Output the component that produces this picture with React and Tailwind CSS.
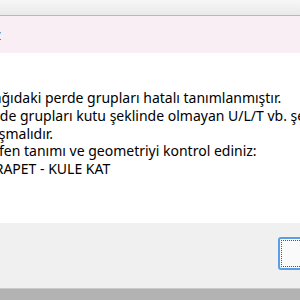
import React from "react";

const lines = [
  "Aşağıdaki perde grupları hatalı tanımlanmıştır.",
  "Perde grupları kutu şeklinde olmayan U/L/T vb. şekillerden",
  "oluşmalıdır.",
  "Lütfen tanımı ve geometriyi kontrol ediniz:",
  "PARAPET - KULE KAT",
];

export default function App() {
  return (
    <div className="w-[300px] h-[300px] overflow-hidden flex flex-col bg-white font-['Segoe_UI','Noto_Sans',sans-serif] text-black">
      {/* title bar */}
      <div className="h-[16px] shrink-0 bg-gradient-to-b from-[#f7f7f7] to-[#e9e9e9] border-b border-[#b9b9b9]" />

      {/* header band */}
      <div className="h-[37px] shrink-0 bg-[#f9eef3] flex items-center overflow-hidden">
        <span className="text-[15px] whitespace-nowrap -ml-[6px] text-[#222]">z</span>
      </div>

      {/* message */}
      <div className="h-[170px] shrink-0 pt-[36px] overflow-hidden">
        <div className="-ml-[22px] text-[14px] leading-[17.75px] whitespace-nowrap">
          {lines.map((line, i) => (
            <div key={i}>{line}</div>
          ))}
        </div>
      </div>

      {/* footer with button */}
      <div className="h-[65px] shrink-0 bg-[#f0f0f0] flex justify-end pt-[14px]">
        <button className="w-[75px] h-[33px] -mr-[53px] rounded-[3px] border-2 border-[#5a9fe3] bg-[#fafafa] p-[1px]">
          <span className="flex h-full w-full items-center justify-center border border-dotted border-[#555] text-[14px]">
            OK
          </span>
        </button>
      </div>

      {/* bottom strip */}
      <div className="flex-1 bg-[#b3b3b3] border-t border-[#cacaca]" />
    </div>
  );
}
